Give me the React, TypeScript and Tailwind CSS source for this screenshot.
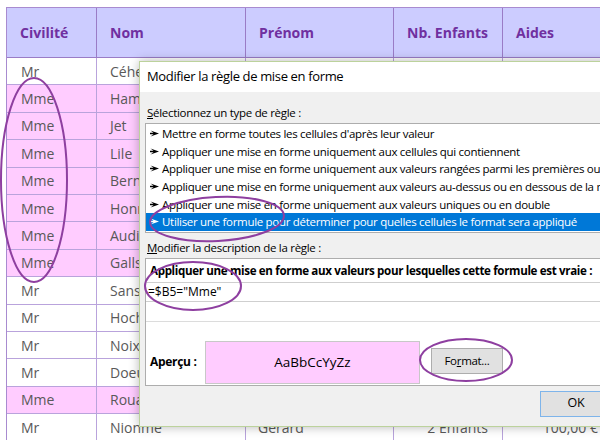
import React from 'react';

type Row = { civ: string; nom: string; mme: boolean };

const rows: Row[] = [
  { civ: 'Mr', nom: 'Céhello', mme: false },
  { civ: 'Mme', nom: 'Hamon', mme: true },
  { civ: 'Mme', nom: 'Jet', mme: true },
  { civ: 'Mme', nom: 'Lile', mme: true },
  { civ: 'Mme', nom: 'Bernard', mme: true },
  { civ: 'Mme', nom: 'Honrat', mme: true },
  { civ: 'Mme', nom: 'Audiard', mme: true },
  { civ: 'Mme', nom: 'Gallsot', mme: true },
  { civ: 'Mr', nom: 'Sansot', mme: false },
  { civ: 'Mr', nom: 'Hochet', mme: false },
  { civ: 'Mr', nom: 'Noixet', mme: false },
  { civ: 'Mr', nom: 'Doeuf', mme: false },
  { civ: 'Mme', nom: 'Rouan', mme: true },
  { civ: 'Mr', nom: 'Nionme', mme: false },
];

const ruleTypes = [
  "Mettre en forme toutes les cellules d'après leur valeur",
  'Appliquer une mise en forme uniquement aux cellules qui contiennent',
  'Appliquer une mise en forme uniquement aux valeurs rangées parmi les premières ou les dernières valeurs',
  'Appliquer une mise en forme uniquement aux valeurs au-dessus ou en dessous de la moyenne',
  'Appliquer une mise en forme uniquement aux valeurs uniques ou en double',
  'Utiliser une formule pour déterminer pour quelles cellules le format sera appliqué',
];

function Arrow({ light }: { light?: boolean }) {
  return (
    <svg width="9" height="7" viewBox="0 0 9 7" className="shrink-0">
      <path d="M0 2.8h3.5L0.5 0.5 9 3.5 0.5 6.5 3.5 4.2H0z" fill={light ? '#ffffff' : '#000000'} />
    </svg>
  );
}

function Sheet() {
  const cell = 'border-r border-b border-[#b9a3dc] flex items-center';
  return (
    <div className="pl-[6px] pt-[7px]">
      <div className="grid grid-cols-[90px_149px_148px_109px_110px] border-l border-t border-[#a88bd0]">
        {['Civilité', 'Nom', 'Prénom', 'Nb. Enfants', 'Aides'].map((h) => (
          <div
            key={h}
            className="h-[50px] bg-[#ccccff] border-r border-b border-[#9a7cc6] flex items-center pl-[13px] text-[14px] font-bold text-[#7030a0]"
          >
            {h}
          </div>
        ))}
        {rows.map((r, i) => {
          const bg = r.mme ? 'bg-[#ffccff]' : 'bg-white';
          return (
            <React.Fragment key={i}>
              <div className={`${cell} ${bg} h-[27.4px] pl-[14px]`}>{r.civ}</div>
              <div className={`${cell} ${bg} h-[27.4px] pl-[13px]`}>{r.nom}</div>
              <div className={`${cell} ${bg} h-[27.4px] pl-[12px]`}>Gérard</div>
              <div className={`${cell} ${bg} h-[27.4px] justify-end pr-[14px]`}>2 Enfants</div>
              <div className={`${cell} ${bg} h-[27.4px] justify-end pr-[14px]`}>100,00 €</div>
            </React.Fragment>
          );
        })}
      </div>
    </div>
  );
}

function Dialog() {
  return (
    <div className="absolute left-[139px] top-[61px] w-[480px] h-[366px] border border-[#bcd29c] bg-[#f0f0f0] shadow-[0_0_10px_rgba(0,0,0,0.28)] flex flex-col text-black">
      <div className="h-[30px] bg-white flex items-center pl-[7px] text-[13px] tracking-[-0.35px]">
        Modifier la règle de mise en forme
      </div>
      <div className="flex flex-col pl-[5px] pt-[12px] text-[11.5px] tracking-[-0.3px]">
        <div className="pl-[2px] h-[17px] leading-[17px]">
          <span className="underline">S</span>électionnez un type de règle :
        </div>
        <div className="mt-[2px] border border-[#adadad] bg-white py-[1px]">
          {ruleTypes.map((t, i) => {
            const sel = i === ruleTypes.length - 1;
            return (
              <div
                key={t}
                className={`h-[17.6px] flex items-center gap-[3px] pl-[4px] whitespace-nowrap ${sel ? 'bg-[#0078d7] text-white' : ''}`}
              >
                <Arrow light={sel} />
                <span>{t}</span>
              </div>
            );
          })}
        </div>
        <div className="pl-[2px] mt-[6px] h-[17px] leading-[17px]">
          <span className="underline">M</span>odifier la description de la règle :
        </div>
        <div className="mt-[2px] h-[128px] border border-[#adadad] bg-white flex flex-col">
          <div className="h-[23px] flex items-center pl-[4px] pt-[2px] font-bold whitespace-nowrap text-[11.6px] tracking-[-0.35px]">
            Appliquer une mise en forme aux valeurs pour lesquelles cette formule est vraie :
          </div>
          <div className="h-[20px] border-t border-b border-[#cfcfcf] flex items-center pl-[2px] text-[12px] tracking-normal">
            {'=$B5="Mme"'}
          </div>
          <div className="h-[20px] border-b border-[#dcdcdc]" />
          <div className="flex items-center pt-[19px]">
            <div className="w-[59px] pl-[4px] font-bold text-[12px]">Aperçu :</div>
            <div className="w-[215px] h-[43px] bg-[#ffccff] border border-[#c8c8c8] flex items-center justify-center text-[13.5px] tracking-normal">
              AaBbCcYyZz
            </div>
            <div className="ml-[11px] w-[72px] h-[26px] bg-[#e1e1e1] border border-[#adadad] flex items-center justify-center text-[11.5px] mb-[3px]">
              Fo<span className="underline">r</span>mat...
            </div>
          </div>
        </div>
        <div className="flex mt-[5px]">
          <div className="ml-[395px] w-[72px] h-[26px] bg-[#e1e1e1] border border-[#7eb4ea] flex items-center justify-center text-[12.5px]">
            OK
          </div>
        </div>
      </div>
    </div>
  );
}

function Annotations() {
  return (
    <svg width="600" height="440" className="absolute left-0 top-0 pointer-events-none">
      <g fill="none" stroke="#8e3fa0" strokeWidth="2">
        <ellipse cx="34" cy="180" rx="33" ry="102" />
        <ellipse cx="217" cy="219" rx="67" ry="22" transform="rotate(-3 217 219)" />
        <ellipse cx="193" cy="286" rx="48" ry="24" />
        <ellipse cx="466" cy="360" rx="46" ry="21" />
      </g>
    </svg>
  );
}

export default function App() {
  return (
    <div className="relative w-[600px] h-[440px] overflow-hidden bg-white font-['Open_Sans',sans-serif] text-[14px] text-[#595959]">
      <Sheet />
      <Dialog />
      <Annotations />
    </div>
  );
}
